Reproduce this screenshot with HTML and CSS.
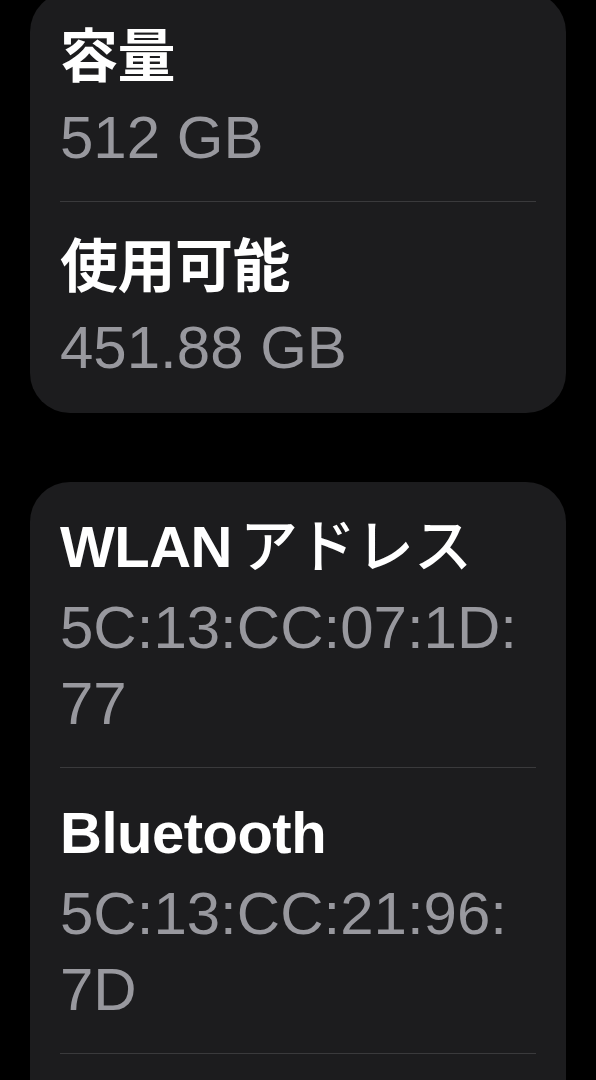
FILE: index.html
```html
<!DOCTYPE html>
<html lang="ja">
<head>
    <meta charset="UTF-8">
    <meta name="viewport" content="width=device-width, initial-scale=1.0">
    <title>情報</title>
    <link rel="stylesheet" href="styles.css">
</head>
<body>
    <div class="list">
        <div class="group">
            <div class="cell">
                <div class="cell-title">容量</div>
                <div class="cell-value">512 GB</div>
            </div>
            <div class="cell">
                <div class="cell-title">使用可能</div>
                <div class="cell-value">451.88 GB</div>
            </div>
        </div>

        <!-- this group keeps going below the fold -->
        <div class="group group-open">
            <div class="cell">
                <div class="cell-title">WLAN<span class="kana">アドレス</span></div>
                <div class="cell-value">5C:<wbr>13:<wbr>CC:<wbr>07:<wbr>1D:<wbr>77</div>
            </div>
            <div class="cell">
                <div class="cell-title">Bluetooth</div>
                <div class="cell-value">5C:<wbr>13:<wbr>CC:<wbr>21:<wbr>96:<wbr>7D</div>
            </div>
        </div>
    </div>
</body>
</html>
```

FILE: styles.css
```css
html, body {
    background-color: #000;
}
body {
    margin: 0;
    padding: 0;
    overflow: hidden;
    font-family: "Liberation Sans", "Noto Sans CJK JP", sans-serif;
}
/* the list is scrolled a little, so the first group starts above the top */
.list {
    display: flex;
    flex-direction: column;
    gap: 69px;
    margin-top: -8px;
    padding: 0 30px;
}
.group {
    background-color: #1c1c1e;
    border-radius: 40px;
    padding-bottom: 2px;
}
.group-open {
    padding-bottom: 120px;
}
.cell {
    margin: 0 30px;
    padding: 30px 0 25px;
    border-bottom: 1px solid #3a3a3c;
}
.group .cell:last-child {
    border-bottom: none;
}
.group-open .cell:last-child {
    border-bottom: 1px solid #3a3a3c;
}
.cell-title {
    color: #fff;
    font-size: 58px;
    line-height: 70px;
    font-weight: bold;
    letter-spacing: -0.5px;
}
.kana {
    margin-left: 8px;
    font-weight: 500;
    letter-spacing: 0;
}
.cell-value {
    margin-top: 8px;
    color: #98989e;
    font-size: 60px;
    line-height: 76px;
}
```
